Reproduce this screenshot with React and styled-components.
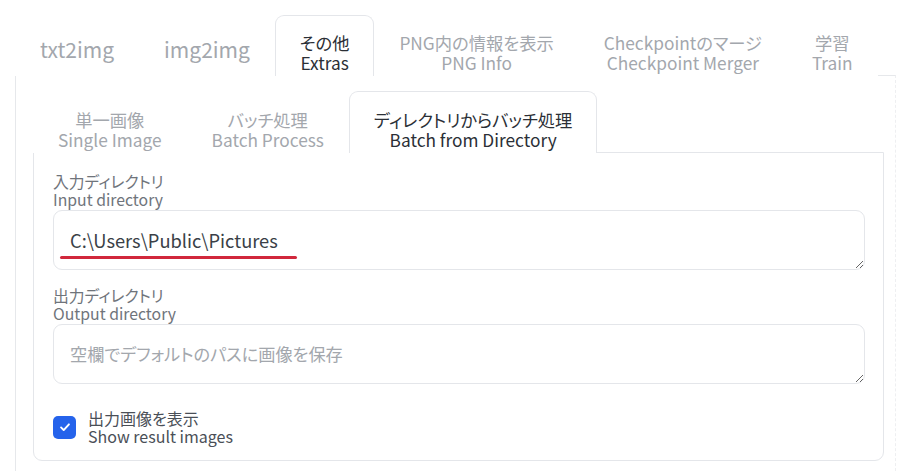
import styled, { createGlobalStyle } from "styled-components";

const GlobalStyle = createGlobalStyle`
  body {
    margin: 0;
    background: #ffffff;
    font-family: "Noto Sans CJK JP", "Noto Sans", sans-serif;
    font-feature-settings: "palt";
  }
`;

const Page = styled.div`
  padding: 15px 4px 0 15px;
`;

const TabRow = styled.div`
  display: flex;
  align-items: flex-end;
`;

const Tab = styled.div`
  position: relative;
  z-index: 1;
  height: ${(p) => p.$height}px;
  box-sizing: border-box;
  padding: ${(p) => (p.$single ? "6px" : "14px")} 24px 0;
  margin-bottom: -1px;
  display: flex;
  flex-direction: column;
  align-items: center;
  justify-content: center;
  border: 1px solid ${(p) => (p.$active ? "#e4e6ea" : "transparent")};
  border-bottom: none;
  border-radius: 9px 9px 0 0;
  background: #ffffff;
  color: ${(p) => (p.$active ? "#2b2f36" : "#a3a7ad")};
  white-space: nowrap;
  font-size: 17.3px;
  line-height: 20px;
`;

const SingleLabel = styled.span`
  font-size: 21px;
  line-height: 28px;
`;

const OuterPanel = styled.div`
  border-top: 1px solid #e6e8eb;
  border-left: 1px solid #e6e8eb;
  border-right: 1px dashed #eeeff1;
  padding: 15px 11px 20px 17px;
`;

const InnerPanel = styled.div`
  border: 1px solid #e4e6ea;
  border-radius: 0 0 9px 9px;
  padding: 20px 18px 15px 19px;
  display: flex;
  flex-direction: column;
`;

const Field = styled.div`
  display: flex;
  flex-direction: column;
  margin-bottom: ${(p) => p.$gap}px;
`;

const Label = styled.div`
  color: #6f747b;
  font-size: 15.8px;
  line-height: 18px;
  margin-bottom: 1px;
`;

const InputWrap = styled.div`
  position: relative;
`;

const TextBox = styled.textarea`
  display: block;
  width: 100%;
  height: 60px;
  box-sizing: border-box;
  padding: 15px 16px;
  border: 1px solid #e4e6ea;
  border-radius: 9px;
  resize: vertical;
  font-family: inherit;
  font-feature-settings: "palt";
  font-size: 18.3px;
  line-height: 28px;
  color: #3a3f47;
  outline: none;
  &::placeholder {
    color: #a3a7ad;
    font-size: 17.2px;
  }
`;

const Underline = styled.div`
  position: absolute;
  left: 7px;
  top: 46px;
  width: 237px;
  height: 3px;
  border-radius: 2px;
  background: #d1283c;
`;

const CheckRow = styled.label`
  display: flex;
  align-items: center;
  gap: 12px;
`;

const CheckBox = styled.span`
  width: 23px;
  height: 23px;
  border-radius: 5px;
  background: #2563eb;
  display: flex;
  align-items: center;
  justify-content: center;
  flex-shrink: 0;
`;

const CheckText = styled.div`
  color: #4a4f57;
  font-size: 16px;
  line-height: 18px;
`;

const topTabs = [
  { single: "txt2img" },
  { single: "img2img" },
  { ja: "その他", en: "Extras", active: true },
  { ja: "PNG内の情報を表示", en: "PNG Info" },
  { ja: "Checkpointのマージ", en: "Checkpoint Merger" },
  { ja: "学習", en: "Train" },
];

const subTabs = [
  { ja: "単一画像", en: "Single Image" },
  { ja: "バッチ処理", en: "Batch Process" },
  { ja: "ディレクトリからバッチ処理", en: "Batch from Directory", active: true },
];

function Tabs({ items, height }) {
  return (
    <TabRow>
      {items.map((t, i) => (
        <Tab key={i} $active={t.active} $single={!!t.single} $height={height}>
          {t.single ? (
            <SingleLabel>{t.single}</SingleLabel>
          ) : (
            <>
              <span>{t.ja}</span>
              <span>{t.en}</span>
            </>
          )}
        </Tab>
      ))}
    </TabRow>
  );
}

export default function App() {
  return (
    <Page>
      <GlobalStyle />
      <Tabs items={topTabs} height={61} />
      <OuterPanel>
        <Tabs items={subTabs} height={62} />
        <InnerPanel>
          <Field $gap={17}>
            <Label>
              入力ディレクトリ
              <br />
              Input directory
            </Label>
            <InputWrap>
              <TextBox defaultValue={"C:\\Users\\Public\\Pictures"} rows={1} />
              <Underline />
            </InputWrap>
          </Field>
          <Field $gap={25}>
            <Label>
              出力ディレクトリ
              <br />
              Output directory
            </Label>
            <TextBox placeholder="空欄でデフォルトのパスに画像を保存" rows={1} />
          </Field>
          <CheckRow>
            <CheckBox>
              <svg width="14" height="14" viewBox="0 0 16 16" fill="none">
                <path
                  d="M3.5 8.5l3 3 6-6.5"
                  stroke="#ffffff"
                  strokeWidth="2.2"
                  strokeLinecap="round"
                  strokeLinejoin="round"
                />
              </svg>
            </CheckBox>
            <CheckText>
              出力画像を表示
              <br />
              Show result images
            </CheckText>
          </CheckRow>
        </InnerPanel>
      </OuterPanel>
    </Page>
  );
}
